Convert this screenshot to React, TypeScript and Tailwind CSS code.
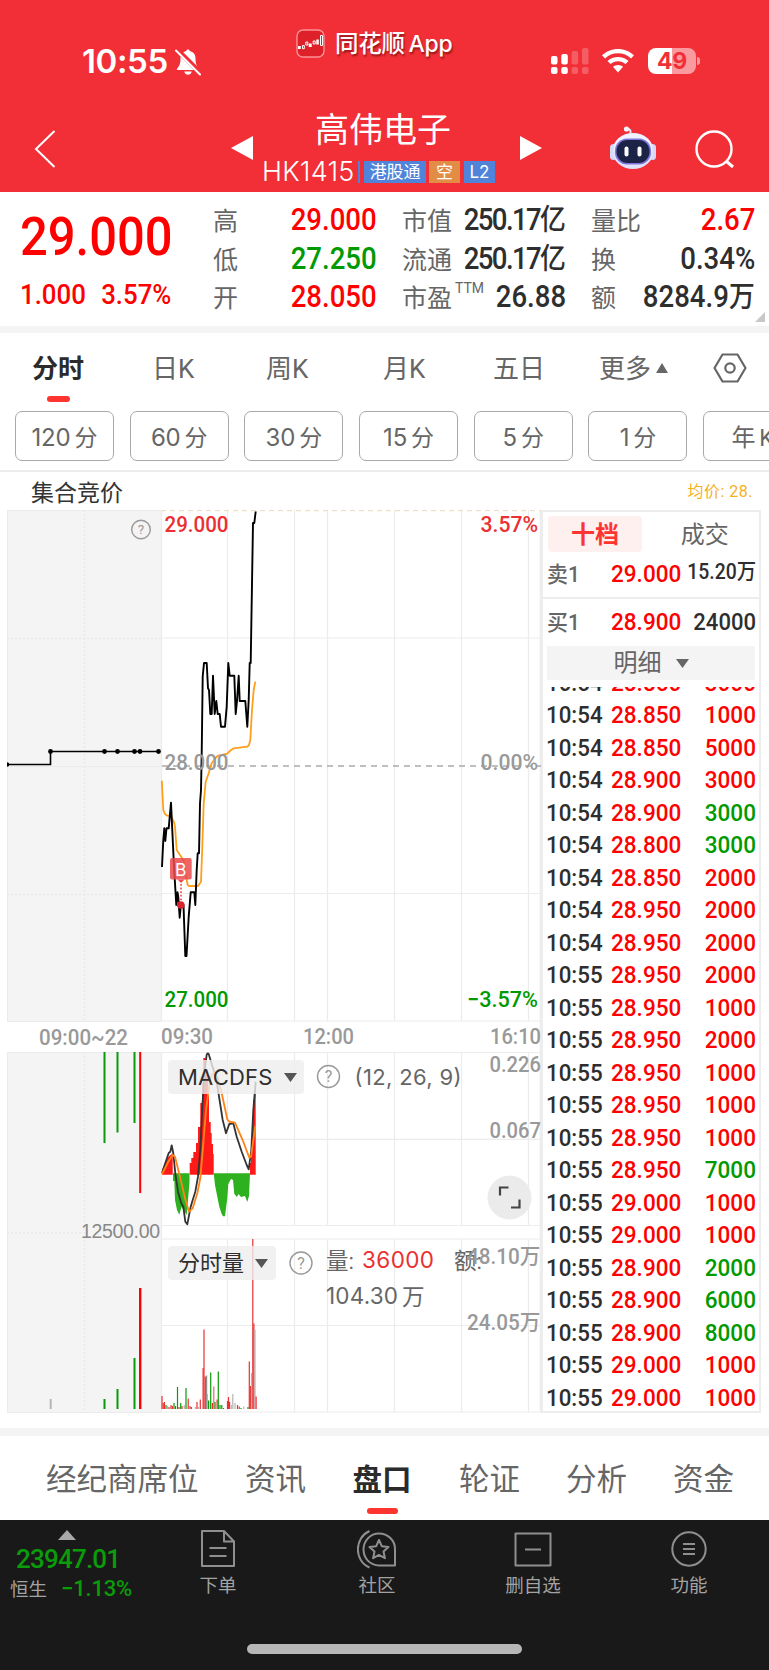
import clsx from 'clsx';

type Side = 'up' | 'down';

type QuoteItem = {
  label: string;
  sup?: string;
  value: string;
  unit?: string;
  color: string;
  tight?: boolean;
};

const QUOTE_COLUMNS: QuoteItem[][] = [
  [
    { label: '高', value: '29.000', color: 'text-[#ff0000]' },
    { label: '低', value: '27.250', color: 'text-[#009a00]' },
    { label: '开', value: '28.050', color: 'text-[#ff0000]' },
  ],
  [
    { label: '市值', value: '250.17', unit: '亿', color: 'text-[#2e2e2e]', tight: true },
    { label: '流通', value: '250.17', unit: '亿', color: 'text-[#2e2e2e]', tight: true },
    { label: '市盈', sup: 'TTM', value: '26.88', color: 'text-[#2e2e2e]' },
  ],
  [
    { label: '量比', value: '2.67', color: 'text-[#ff0000]' },
    { label: '换', value: '0.34%', color: 'text-[#2e2e2e]' },
    { label: '额', value: '8284.9', unit: '万', color: 'text-[#2e2e2e]' },
  ],
];

const PERIODS = ['120分', '60分', '30分', '15分', '5分', '1分', '年K'];

const TRADES: [string, string, string, Side][] = [
  ['10:54', '28.850', '3000', 'up'],
  ['10:54', '28.850', '1000', 'up'],
  ['10:54', '28.850', '5000', 'up'],
  ['10:54', '28.900', '3000', 'up'],
  ['10:54', '28.900', '3000', 'down'],
  ['10:54', '28.800', '3000', 'down'],
  ['10:54', '28.850', '2000', 'up'],
  ['10:54', '28.950', '2000', 'up'],
  ['10:54', '28.950', '2000', 'up'],
  ['10:55', '28.950', '2000', 'up'],
  ['10:55', '28.950', '1000', 'up'],
  ['10:55', '28.950', '2000', 'up'],
  ['10:55', '28.950', '1000', 'up'],
  ['10:55', '28.950', '1000', 'up'],
  ['10:55', '28.950', '1000', 'up'],
  ['10:55', '28.950', '7000', 'down'],
  ['10:55', '29.000', '1000', 'up'],
  ['10:55', '29.000', '1000', 'up'],
  ['10:55', '28.900', '2000', 'down'],
  ['10:55', '28.900', '6000', 'down'],
  ['10:55', '28.900', '8000', 'down'],
  ['10:55', '29.000', '1000', 'up'],
  ['10:55', '29.000', '1000', 'up'],
];

// chart geometry
const PRICE_LINE =
  '162,867 163.3,840 164.3,828.3 165.3,841 166.5,828.3 168.7,828.3 171,802.7 174,866.7 176.3,905 177.5,892.3 178.3,897 179.7,917.7 181,903 183.5,905 185.3,956 186.5,956 188.7,916.7 190.7,892.3 194.3,892.3 195.3,905 196.7,870 197.7,853.3 199,853.3 200,803.3 201,790 201.7,753.3 202.7,676.7 204,663 206.7,663 208,688.3 209,690 210.3,714 211.7,714 213,675.7 214.7,714 216.3,701 217.7,714 219.7,714 221,726.7 225,726.7 226.7,706.7 228.3,663 229.7,675.7 234.3,675.7 235.7,714 237,701 238.7,675.7 239.7,701 245.3,701 247.3,726.7 248.7,700 249.7,663 250.7,663 253,523 254.3,523 255.7,511.5';
const AVG_LINE =
  '161.8,780.7 163.3,810 165,814 167.3,815.7 170.7,816 174,822 175,826.7 176.7,850 180,855 183.7,860.7 186,876.7 187.7,885 189,886 198,886 201,881.7 202.3,846.7 203.7,803.3 205.7,781.7 208.7,773.3 211.7,763 217.3,756 227.3,753.7 231,750 233.7,748.3 247.3,746.7 249,745 250.3,740 252,710 253.7,690 255.3,681.7';
const DIF_LINE =
  'M162,1173 L165.3,1163 L168.7,1153 L170.3,1151.7 L171.7,1145.3 L173.3,1153.3 L175.3,1173.3 L178,1191.7 L181.3,1203.3 L183.3,1206.7 L185.3,1221.7 L187.3,1224.3 L190.7,1206.7 L192.7,1200 L195.3,1191.7 L198,1176.7 L200.3,1150 L202.3,1106.7 L204.7,1070 L206.7,1054.5 Q208.5,1052 209.3,1056 L212,1065 L216,1076.7 L218,1090 L222.7,1120 L226,1133.3 L229.3,1124 L233.3,1123.3 L236.7,1136.7 L241.7,1151.7 L246.7,1165 L248.7,1169.3 L251.3,1150 L253.3,1110 L255.7,1081.7';
const DEA_LINE =
  'M162,1174 L168.3,1161.7 L172.7,1155 L175,1156.7 L180,1176.7 L185,1198.3 L189,1211.7 L192.7,1208.3 L197.3,1193.3 L200.3,1178.3 L203.3,1143.3 L206,1110 L210,1080 Q214,1066 218.3,1080 L221.7,1093.3 L227.3,1119.3 L229,1121.5 L235,1122.7 L243.3,1141.7 L249.3,1157.7 L251,1156.7 L253.3,1140 L255.3,1126';
const MACD_UP = [
  'M162,1174.7 V1170 L165,1163 L168.3,1156.7 L172.7,1153.3 V1174.7Z',
  'M189.7,1174.7 V1163 H191.3 V1158 H193.3 V1152 H196 V1143 H198 V1127 H200.3 V1103 H202.3 V1083 H203.3 V1058 H205.7 V1070 H208 V1096 H209 V1122 H210.7 V1133 H211.7 V1144 H213 V1154 H213.7 V1174.7Z',
  'M250,1174.7 V1163 H251 V1150 H252 V1120 H253 V1100 H254 V1093 H255.7 V1174.7Z',
];
const MACD_DOWN = [
  'M173,1173.3 V1181 H174.3 L175,1200 L177,1210 L179.3,1214.7 L181.5,1207 L186.7,1215 L188,1200 L189.5,1182 V1173.3Z',
  'M213.7,1173.3 L215,1185 L219.3,1206.7 L221.7,1214 L223,1216.3 H225 L227.3,1198 L228.3,1184 L231,1179 L233,1180 L234.3,1194 L237,1197 L238.5,1194 L241,1197 L245,1196 L247.3,1202 L249,1196 L250,1173.3Z',
];

// [x, top, color]
const VOLUME_BARS: [number, number, string][] = [
  [162, 1396, '#ea3032'], [163.2, 1403, '#ea3032'], [164.4, 1402, '#ea3032'], [166, 1405, '#0a9a0a'], [167.5, 1406, '#b5b5b5'],
  [169, 1407, '#ea3032'], [171, 1405, '#ea3032'], [172.4, 1406, '#ea3032'], [174, 1403, '#0a9a0a'], [175.5, 1406, '#0a9a0a'],
  [177.5, 1387, '#0a9a0a'], [179, 1407, '#ea3032'], [180.7, 1403, '#0a9a0a'], [182, 1406, '#ea3032'], [184.3, 1405, '#b5b5b5'],
  [186, 1388, '#0a9a0a'], [188.2, 1398.5, '#ea3032'], [190, 1406, '#ea3032'], [191.5, 1407, '#ea3032'], [195.5, 1407, '#b5b5b5'],
  [197, 1402, '#ea3032'], [198.5, 1407, '#b5b5b5'], [200.3, 1399.5, '#ea3032'], [203.1, 1368, '#ea3032'], [204, 1329.5, '#ea3032'],
  [205.3, 1376.5, '#ea3032'], [206.6, 1375.5, '#9b8a8a'], [207.4, 1394, '#b5b5b5'], [208.6, 1400.5, '#0a9a0a'], [210.7, 1372.5, '#0a9a0a'],
  [212.4, 1403, '#ea3032'], [213.8, 1386.5, '#ea6a6a'], [215, 1402, '#0a9a0a'], [217.1, 1399.5, '#ea3032'], [218.3, 1371.5, '#0a9a0a'],
  [220, 1405, '#0a9a0a'], [221.8, 1405, '#0a9a0a'], [223.5, 1408, '#ea3032'], [227.5, 1401, '#ea3032'], [228.5, 1397, '#ea3032'],
  [229.6, 1402, '#ea3032'], [231.3, 1405, '#b5b5b5'], [232.8, 1394, '#b5b5b5'], [235, 1403, '#b5b5b5'], [237.5, 1405, '#ea3032'],
  [239.2, 1406.5, '#ea3032'], [241, 1408, '#0a9a0a'], [243.8, 1406.5, '#b5b5b5'], [248, 1407, '#0a9a0a'], [249.3, 1361.5, '#ea3032'],
  [250.6, 1386, '#ea3032'], [251.5, 1373, '#b5b5b5'], [252.8, 1239, '#ea3032'], [253.9, 1323.5, '#ea3032'], [255, 1329.5, '#b5b5b5'],
  [256.1, 1396.5, '#ea3032'],
];

const GRID_X = [227.5, 294.5, 327.5, 394.5, 461.5, 528.5];

function Caret({ className }: { className?: string }) {
  return (
    <svg viewBox="0 0 13 9" className={clsx('w-[13px] h-[9px] shrink-0', className)} fill="currentColor">
      <path d="M0 0H13L6.500 9Z" />
    </svg>
  );
}

function HelpIcon({ cx, cy, r }: { cx: number; cy: number; r: number }) {
  return (
    <g>
      <circle cx={cx} cy={cy} r={r} fill="none" stroke="#999" strokeWidth={1.4} />
      <text x={cx} y={cy + r * 0.5} textAnchor="middle" fontSize={r * 1.45} fill="#999">?</text>
    </g>
  );
}

type LabelProps = { x: number; y: number; w: number; fill?: string; children: string };

// axis label squeezed to a fixed width
function AxisLabel({ x, y, w, fill, children }: LabelProps) {
  return (
    <text x={x} y={y} textLength={w} lengthAdjust="spacingAndGlyphs" fill={fill}>{children}</text>
  );
}

function StatusBar() {
  return (
    <div className="flex h-[97px] pt-[26px]">
      <div className="flex items-center w-[296px] pl-[82px] pt-[17px] h-[54px] font-['Inter'] font-semibold text-[33px] leading-none tracking-[-0.4px]">
        10:55
        <svg viewBox="0 0 26 28" className="w-[26px] h-7 ml-[7px]">
          <path d="M13 1.500c.9 0 1.600.6 1.800 1.500 3.600.8 5.700 3.600 5.700 7.500 0 6 1.500 7.800 3.500 10.300.4.700 0 1.200-.7 1.200H2.700c-.8 0-1.200-.6-.7-1.200C4 18.300 5.500 16.500 5.500 10.500c0-3.900 2.100-6.700 5.700-7.500.2-.9.900-1.500 1.800-1.500Z" fill="#fff" />
          <path d="M9.300 23.500h7.400c-.5 2.100-2 3.300-3.700 3.300s-3.200-1.200-3.700-3.300Z" fill="#fff" />
          <path d="M1.500 1 26 25.500" stroke="#f22f37" strokeWidth="5" />
          <path d="M1 2.500 25 26.500" stroke="#fff" strokeWidth="2" strokeLinecap="round" />
        </svg>
      </div>
      <div className="flex gap-[10px] h-[36px] items-center w-[254px] text-[23.500px] font-medium tracking-[-0.3px] [text-shadow:1px_2px_2px_rgba(90,0,0,0.6)]">
        <svg viewBox="0 0 29 29" className="w-[29px] h-[29px] -mt-[2px]">
          <rect x="1" y="1" width="27" height="27" rx="6" fill="#dd2029" stroke="#fa9296" strokeWidth="1.400" />
          <path d="M2 17h2.800v3H2ZM12.700 14.500h3v3.500h-3ZM20.300 10.500h2.500V15.500h-2.500Z" fill="#fff" />
          <path d="M6.500 16.500h1.800v3.200H6.500ZM9.800 13h2v3h-2ZM17.200 12h2v3h-2ZM24.500 6.500h2v10h-2Z" fill="none" stroke="#fff" strokeWidth="1" />
        </svg>
        <span className="pt-[2px]">同花顺<span className="font-['Inter'] text-[23px] ml-[4px]">App</span></span>
      </div>
      <div className="flex items-center h-[70px] pl-px">
        <svg viewBox="0 0 38 28" className="w-[38px] h-7">
          <g fill="#fff">
            <rect x="0" y="9" width="6.500" height="8.500" rx="2" />
            <rect x="10.300" y="7" width="6.500" height="10.500" rx="2" />
            <rect x="0" y="20" width="6.500" height="7" rx="2" />
            <rect x="10.300" y="20" width="6.500" height="7" rx="2" />
            <g opacity=".22">
              <rect x="20.600" y="4" width="6.500" height="13.500" rx="2" />
              <rect x="31" y="1" width="6.500" height="16.500" rx="2" />
              <rect x="20.600" y="20" width="6.500" height="7" rx="2" />
              <rect x="31" y="20" width="6.500" height="7" rx="2" />
            </g>
          </g>
        </svg>
        <svg viewBox="0 0 32 24" className="w-8 h-6 ml-[13px]" fill="#fff">
          <path d="M16 0C22.200 0 27.800 2.400 32 6.300L29 9.400C25.600 6.200 21 4.300 16 4.300S6.400 6.200 3 9.400L0 6.300C4.200 2.400 9.800 0 16 0Z" />
          <path d="M16 8C20 8 23.700 9.500 26.500 12L23.500 15.100C21.500 13.300 18.900 12.200 16 12.200S10.500 13.300 8.500 15.100L5.500 12C8.300 9.500 12 8 16 8Z" />
          <path d="M16 16C18 16 19.700 16.700 21 17.800L16 23.500L11 17.800C12.300 16.700 14 16 16 16Z" />
        </svg>
        <div className="flex items-center ml-[14px]">
          <div className="flex items-center justify-center w-12 h-[26px] rounded-[8px] bg-[linear-gradient(90deg,#fff_49%,#f99a9e_49%)] font-['Inter'] font-bold text-[23px] leading-none text-[#f22f37] tracking-[-0.3px]">49</div>
          <div className="w-[3px] h-2 ml-px rounded-r-full bg-[#f99a9e]" />
        </div>
      </div>
    </div>
  );
}

function RobotIcon() {
  return (
    <svg viewBox="0 0 46 44" className="w-[46px] h-11">
      <path d="M20.500 8.500V5.500Q20.500 3 17.500 3" fill="none" stroke="#e3e4fb" strokeWidth="2" />
      <circle cx="16.500" cy="3" r="2.600" fill="#f4f4ff" />
      <rect x="0" y="18" width="7" height="16" rx="3.500" fill="#d5d8f6" />
      <rect x="39" y="18" width="7" height="16" rx="3.500" fill="#d5d8f6" />
      <ellipse cx="23" cy="25" rx="20.500" ry="18" fill="#dfe2fa" />
      <ellipse cx="23" cy="22" rx="19" ry="14.500" fill="#f1f2ff" />
      <rect x="5" y="12.500" width="36" height="26" rx="12" fill="#7f74dc" />
      <rect x="6.500" y="14" width="33" height="23" rx="11" fill="#1b2447" />
      <rect x="14.500" y="20.500" width="4" height="10" rx="2" fill="#fff" />
      <rect x="27.500" y="20.500" width="4" height="10" rx="2" fill="#fff" />
    </svg>
  );
}

function Header() {
  return (
    <header className="h-[192px] bg-[#f22f37] text-white">
      <StatusBar />
      <div className="flex h-[95px]">
        <svg viewBox="0 0 22 38" className="w-[22px] h-[38px] ml-[34px] mt-[33px]" fill="none" stroke="#fff" strokeWidth="2">
          <path d="M20.500 1 2 19 20.500 37" />
        </svg>
        <svg viewBox="0 0 22 24" className="w-[22px] h-6 ml-[175px] mt-[39px]" fill="#fff"><path d="M22 0V24L0 12Z" /></svg>
        <div className="flex flex-col w-[244px] ml-[11px] pt-[11px] shrink-0">
          <h1 className="text-[34px] leading-[44px] pl-[51px] whitespace-nowrap font-normal">高伟电子</h1>
          <div className="flex items-center h-[40px] text-[17px] leading-[22px]">
            <span className="font-['Inter'] font-light text-[27px] tracking-[0.200px] w-[97px] -ml-[2px]">HK1415</span>
            <span className="w-[2px] h-[22px] bg-[#4f84da] -ml-[1px]" />
            <span className="w-[62px] h-[22px] ml-[4px] text-center bg-[#4f84da] tracking-[-0.2px]">港股通</span>
            <span className="w-[31px] h-[22px] ml-[3px] text-center bg-[#e28c45]">空</span>
            <span className="w-[31px] h-[22px] ml-[4px] text-center bg-[#4f84da] font-['Inter']">L2</span>
          </div>
        </div>
        <svg viewBox="0 0 22 24" className="w-[22px] h-6 ml-[12px] mt-[39px]" fill="#fff"><path d="M0 0V24L22 12Z" /></svg>
        <div className="ml-[68px] mt-[29px]"><RobotIcon /></div>
        <svg viewBox="0 0 40 40" className="w-10 h-10 ml-[39px] mt-[32px]" fill="none" stroke="#fff" strokeWidth="2.400">
          <circle cx="19" cy="20" r="17.500" />
          <path d="M31 32 38 38" strokeWidth="3" />
        </svg>
      </div>
    </header>
  );
}

function QuotePanel() {
  return (
    <section className="relative flex h-[134px] pl-[20px] pt-[8px] font-medium">
      <div className="w-[193px] text-[#ff0000]">
        <div className="text-[54px] leading-[54px] pt-[10px] origin-left scale-x-[0.905]">29.000</div>
        <div className="flex gap-[17px] text-[28.500px] leading-[34px] pt-[14px] origin-left scale-x-[0.905]">
          <span>1.000</span>
          <span>3.57%</span>
        </div>
      </div>
      <div className="flex gap-[26px]">
        {QUOTE_COLUMNS.map((col, i) => (
          <div key={i} className="flex flex-col w-[164px] -mr-px">
            {col.map((item) => (
              <div key={item.label} className="flex justify-between h-[38.500px] leading-[40px] whitespace-nowrap">
                <span className="text-[25px] font-normal text-[#666] leading-[43px]">
                  {item.label}
                  {item.sup && <sup className="text-[14px] top-[-14px] ml-[3px] leading-none">{item.sup}</sup>}
                </span>
                <span className={clsx('text-[31px] -ml-8 origin-right scale-x-[0.89]', item.color, item.tight && 'tracking-[-1.800px]')}>
                  {item.value}
                  {item.unit && <span className="text-[29px] tracking-normal">{item.unit}</span>}
                </span>
              </div>
            ))}
          </div>
        ))}
      </div>
      <svg viewBox="0 0 10 10" className="absolute right-1 bottom-1 w-2.5 h-2.5" fill="#c8c8c8"><path d="M10 0V10H0Z" /></svg>
    </section>
  );
}

function ChartTabs() {
  return (
    <nav className="border-t-[7px] border-[#f4f4f4] h-[146px] border-b-2 border-b-[#ededed] overflow-hidden">
      <div className="flex h-[78px] pt-[18px] text-[26px] leading-[36px] text-[#666] whitespace-nowrap">
        <div className="flex flex-col items-center w-[52px] ml-[32px] font-bold text-[#2b2b2b]">
          分时
          <span className="w-[23px] h-[6px] mt-[9px] rounded-sm bg-[#fd3530] shrink-0" />
        </div>
        <span className="w-[42px] ml-[68px]">日K</span>
        <span className="w-[42px] ml-[72px]">周K</span>
        <span className="w-[42px] ml-[75px]">月K</span>
        <span className="w-[52px] ml-[68px]">五日</span>
        <span className="w-[52px] ml-[54px]">更多</span>
        <svg viewBox="0 0 12 10" className="w-3 h-[10px] ml-[5px] mt-[12px]" fill="#666"><path d="M6 0 12 10H0Z" /></svg>
        <svg viewBox="0 0 34 30" className="w-[34px] h-[30px] ml-[45px] mt-[2px]" fill="none" stroke="#666" strokeWidth="2.200">
          <path d="M9.500 1.500H24.500L32.500 15 24.500 28.500H9.500L1.500 15Z" strokeLinejoin="round" />
          <circle cx="17" cy="15" r="4.700" />
        </svg>
      </div>
      <div className="flex gap-[15.700px] pl-[15px]">
        {PERIODS.map((p) => (
          <button key={p} type="button" className="w-[99px] h-[50px] shrink-0 pt-[3px] border-[1.500px] border-[#a9a9a9] rounded-[7px] text-[23px] leading-none text-[#666]">
            <span className="font-['Inter','Noto_Sans_CJK_SC'] text-[24px] tracking-[-0.2px]">{p.slice(0, -1)}</span>
            <span className="ml-1">{p.slice(-1)}</span>
          </button>
        ))}
      </div>
    </nav>
  );
}

function Charts() {
  return (
    <div className="relative w-[541px] h-[903px] shrink-0">
      <svg viewBox="0 510 541 903" className="w-[541px] h-[903px]">
        {/* pre-open auction pane */}
        <path d="M7 510H161V1022H7ZM7 1052H161V1413H7Z" fill="#f4f4f4" />
        <g stroke="#e8e8e8" strokeWidth="1.300" strokeDasharray="2 2">
          <path d="M84.500 510V1022M84.500 1052V1413M7 638.500H161M7 894.500H161M7 1233H82" />
        </g>
        <path d="M7 766.500H161M7 510.500H161M7 1021.500H161M7 1052.500H161M7 1412.500H161M7.500 510V1022M7.500 1052V1413" stroke="#ebebeb" />
        <g stroke="#ececec" strokeWidth="1.200">
          {GRID_X.map((x) => (
            <path key={x} d={`M${x} 510V1021M${x} 1052V1225M${x} 1239V1412`} />
          ))}
          <path d="M161.500 510V1021M161.500 1052V1412M540.300 510V1412" />
          <path d="M161 638H541M161 893.500H541M161 1021H541M161 1052.500H541M161 1139.300H541M161 1225.500H541M161 1239H541M161 1325.500H541M161 1412H541" />
        </g>
        <path d="M161 510.500H541" stroke="#eedfc9" strokeWidth="1.600" strokeDasharray="5 4" />
        <path d="M162 766H541" stroke="#aaa" strokeWidth="1.400" strokeDasharray="6 5" />

        <path d="M7 764.500H50.500V751.500H158.500" fill="none" stroke="#000" strokeWidth="1.600" />
        {[50.5, 104.5, 117.5, 134.5, 140, 158.5].map((x) => (
          <circle key={x} cx={x} cy="751.500" r="2.400" />
        ))}
        <path d="M7 762.200a2.300 2.300 0 0 1 0 4.600Z" />

        <polyline points={AVG_LINE} fill="none" stroke="#ff9f1c" strokeWidth="1.800" strokeLinejoin="round" />
        <polyline points={PRICE_LINE} fill="none" stroke="#000" strokeWidth="1.900" strokeLinejoin="round" />

        <g>
          <rect x="170" y="858" width="21.700" height="21.500" rx="2" fill="#ea4a4c" fillOpacity=".85" />
          <path d="M177.500 879.500h7l-3.500 3.500Z" fill="#ea4a4c" />
          <path d="M181 884V901" stroke="#ea4a4c" strokeWidth="1.600" strokeDasharray="1.800 1.800" />
          <circle cx="180.800" cy="905" r="3.800" fill="#d8232c" />
          <text x="180.800" y="875.500" textAnchor="middle" fontSize="17.500" fill="#fff" className="font-['Inter']">B</text>
        </g>

        <g fontSize="22" className="font-medium">
          <AxisLabel x={164.500} y={532} w={64} fill="#ea3032">29.000</AxisLabel>
          <AxisLabel x={164.500} y={769.500} w={64} fill="#999">28.000</AxisLabel>
          <AxisLabel x={164.500} y={1007} w={64} fill="#009900">27.000</AxisLabel>
          <AxisLabel x={480.500} y={532} w={57.500} fill="#ea3032">3.57%</AxisLabel>
          <AxisLabel x={480.500} y={769.500} w={57.500} fill="#999">0.00%</AxisLabel>
          <AxisLabel x={467} y={1007} w={71} fill="#009900">−3.57%</AxisLabel>
        </g>
        <g fontSize="22" fill="#999" className="font-medium">
          <AxisLabel x={39} y={1045} w={89}>09:00~22</AxisLabel>
          <AxisLabel x={161} y={1043.500} w={52}>09:30</AxisLabel>
          <AxisLabel x={303} y={1043.500} w={51}>12:00</AxisLabel>
          <AxisLabel x={490} y={1043.500} w={51}>16:10</AxisLabel>
          <AxisLabel x={489.500} y={1072} w={51.500}>0.226</AxisLabel>
          <AxisLabel x={489.500} y={1138} w={51.500}>0.067</AxisLabel>
        </g>
        <text x="81" y="1238" fontSize="19.500" textLength="79" fill="#888" className="font-['Liberation_Sans']">12500.00</text>
        <HelpIcon cx={141} cy={529.500} r={9.300} />

        {/* auction bars */}
        <g strokeWidth="2">
          <path d="M104.500 1052V1143M117.500 1052V1132.500M134.500 1052V1123" stroke="#0a9a0a" />
          <path d="M140.200 1052V1193" stroke="#ff0000" />
          <path d="M50.700 1399V1409" stroke="#b5b5b5" />
          <path d="M104.500 1399V1409M117.500 1389V1409M134.500 1358V1409" stroke="#0a9a0a" />
          <path d="M140.200 1288V1409" stroke="#ff0000" strokeWidth="2.400" />
        </g>

        {MACD_UP.map((d) => <path key={d} d={d} fill="#ff1a1a" />)}
        {MACD_DOWN.map((d) => <path key={d} d={d} fill="#2eb11f" />)}
        <path d={DIF_LINE} fill="none" stroke="#333" strokeWidth="1.800" strokeLinejoin="round" />
        <path d={DEA_LINE} fill="none" stroke="#ff8417" strokeWidth="1.800" strokeLinejoin="round" />

        {VOLUME_BARS.map(([x, top, color]) => (
          <rect key={x} x={x - 0.6} y={top} width="1.200" height={1409 - top} fill={color} />
        ))}

        <HelpIcon cx={328.500} cy={1076.500} r={11} />
        <HelpIcon cx={301} cy={1263} r={11} />
        <text x="354.500" y="1084.500" fontSize="22" textLength="107" fill="#666" className="font-['Inter']">(12, 26, 9)</text>

        <g fontSize="22.500" fill="#666">
          <text x="326" y="1268.500">量:</text>
          <text x="362" y="1268" textLength="72" fill="#ea3032" className="font-['Inter']">36000</text>
          <text x="454" y="1268.500">额:</text>
          <text x="326" y="1304" textLength="72" className="font-['Inter']">104.30</text>
          <text x="402" y="1305">万</text>
        </g>
        <g fontSize="22" fill="#999" className="font-medium">
          <AxisLabel x={467} y={1264} w={73.500}>48.10万</AxisLabel>
          <AxisLabel x={467} y={1330} w={73.500}>24.05万</AxisLabel>
        </g>

        <circle cx="509.500" cy="1197.500" r="22" fill="#ebebeb" />
        <path d="M500 1195.500V1187.500H508.500M519.500 1199.500V1207.500H511" fill="none" stroke="#444" strokeWidth="2.200" />
      </svg>
      <button type="button" className="absolute left-[168px] top-[550px] flex items-center gap-[11px] w-[136px] h-[34px] pl-[10px] rounded bg-[#eeeeee]/80 font-['Inter'] text-[22px] tracking-[0.2px] text-[#2e2e2e]">
        MACDFS
        <Caret className="text-[#555]" />
      </button>
      <button type="button" className="absolute left-[168px] top-[736px] flex items-center gap-[11px] w-[108px] h-[34px] pl-[10px] rounded bg-[#eeeeee]/80 text-[22px] text-[#2e2e2e] whitespace-nowrap">
        <span className="pt-px">分时量</span>
        <Caret className="text-[#555]" />
      </button>
    </div>
  );
}

function OrderRow({ label, price, children }: { label: string; price: string; children: React.ReactNode }) {
  return (
    <>
      <span className="w-[64px] text-[22px] text-[#666] origin-left scale-x-[0.95]">{label}</span>
      <span className="w-[76px] text-[24.500px] text-[#ff0000] origin-left scale-x-[0.92]">{price}</span>
      <span className="w-[69px] text-right text-[#2e2e2e] whitespace-nowrap origin-right scale-x-[0.9] flex justify-end">{children}</span>
    </>
  );
}

function OrderBook() {
  return (
    <aside className="w-[220px] h-[903px] shrink-0 border-x-2 border-y-2 border-[#ededed] overflow-hidden font-medium">
      <div className="flex gap-1 h-10 pl-[4.500px] pt-1 text-[24px] leading-[38px] text-center">
        <div className="w-[98px] h-9 rounded-sm bg-[#fff0f0] font-bold text-[#fd3530]">十档</div>
        <div className="w-[116px] pl-1 font-normal text-[#666]">成交</div>
      </div>
      <div className="flex items-center h-[47px] pl-[3.500px] pb-px border-b-2 border-[#ededed]">
        <OrderRow label="卖1" price="29.000"><span className="text-[21.500px] -mt-[3px]">15.20万</span></OrderRow>
      </div>
      <div className="flex items-center h-[47px] pl-[3.500px] pb-px">
        <OrderRow label="买1" price="28.900"><span className="text-[24.500px]">24000</span></OrderRow>
      </div>
      <div className="flex items-center justify-center gap-[14px] w-[208px] h-[34px] ml-[4px] bg-[#f4f4f4] text-[24px] font-normal text-[#666]">
        明细
        <Caret />
      </div>
      <div className="flex flex-col justify-end h-[727px] mt-[7px] overflow-hidden">
        {TRADES.map(([time, price, volume, side], i) => (
          <div key={i} className="flex h-[32.500px] leading-[32.500px] shrink-0 pl-[3px] text-[24.500px]">
            <span className="w-[64.500px] text-[#2e2e2e] origin-left scale-x-[0.91]">{time}</span>
            <span className="w-[76px] text-[#ff0000] origin-left scale-x-[0.92]">{price}</span>
            <span className={clsx('w-[69px] text-right origin-right scale-x-[0.92]', side === 'up' ? 'text-[#ff0000]' : 'text-[#009a00]')}>{volume}</span>
          </div>
        ))}
      </div>
    </aside>
  );
}

function SectionTabs() {
  return (
    <nav className="flex h-[92px] border-t-[8px] border-[#f4f4f4] pt-[24px] text-[30.500px] leading-[40px] text-[#666] whitespace-nowrap">
      <span className="w-[152px] ml-[46px]">经纪商席位</span>
      <span className="w-[60px] ml-[47px]">资讯</span>
      <div className="flex flex-col items-center w-[60px] ml-[47px] text-[29.500px] font-bold text-[#2b2b2b]">
        盘口
        <span className="w-[31px] h-[6px] mt-[8px] rounded-sm bg-[#fd3530] shrink-0" />
      </div>
      <span className="w-[60px] ml-[47px]">轮证</span>
      <span className="w-[60px] ml-[47px]">分析</span>
      <span className="w-[60px] ml-[47px]">资金</span>
    </nav>
  );
}

const ACTIONS = [
  {
    label: '下单',
    pos: 'w-20 ml-[45px]',
    icon: <path d="M4 2H26L36 12.500V37H4ZM26 2V12.500H36M11.500 19H28.500M11.500 27H28.500" />,
  },
  {
    label: '社区',
    pos: 'w-20 ml-[79px]',
    icon: (
      <>
        <path d="M22 4.500C31 4.500 38 11.500 38 20V36.500H22C13 36.500 6.500 29 6.500 20.500S13 4.500 22 4.500Z" />
        <path d="M12.500 2C-3 9-3 32 12.500 38.500" />
        <path d="M22 11 24.800 17.200 31.500 18 26.500 22.500 27.900 29.200 22 25.800 16.100 29.200 17.500 22.500 12.500 18 19.200 17.200Z" />
      </>
    ),
  },
  {
    label: '删自选',
    pos: 'w-[100px] ml-[66px]',
    icon: <path d="M2.500 4.500H37.500V36.500H2.500ZM12 20.500H28" />,
  },
  {
    label: '功能',
    pos: 'w-[100px] ml-[56px]',
    icon: (
      <>
        <circle cx="20" cy="20" r="16.700" />
        <path d="M14 15H26M14 20H26M14 25H26" />
      </>
    ),
  },
];

function BottomBar() {
  return (
    <footer className="h-[150px] bg-[#191919] text-[#a3a3a3] flex flex-col">
      <div className="flex h-[124px]">
        <div className="w-[133px] pt-[10px] shrink-0">
          <svg viewBox="0 0 18 10" className="w-[18px] h-2.5 ml-[58px]" fill="#a8a8a8"><path d="M9 0 18 10H0Z" /></svg>
          <div className="pl-4 pt-[5px] text-[26px] leading-[29px] tracking-[-0.800px] font-medium text-[#0a9c0a]">23947.01</div>
          <div className="flex pl-[10px] pt-[2px] leading-[26px] whitespace-nowrap">
            <span className="text-[18.500px] w-[51px] pt-px">恒生</span>
            <span className="text-[22px] tracking-[-0.2px] font-medium text-[#0a9c0a]">−1.13%</span>
          </div>
        </div>
        {ACTIONS.map(({ label, pos, icon }) => (
          <button key={label} type="button" className={clsx('flex flex-col items-center shrink-0 pt-[9px]', pos)}>
            <svg viewBox="0 0 40 40" className="w-10 h-10" fill="none" stroke="#8f8f8f" strokeWidth="2" strokeLinejoin="round">
              {icon}
            </svg>
            <span className="text-[18.500px] leading-[26px] mt-[4px]">{label}</span>
          </button>
        ))}
      </div>
      <div className="w-[275px] h-[10px] ml-[247px] rounded-full bg-[#b7b7b7]" />
    </footer>
  );
}

export default function App() {
  return (
    <div className="w-[769px] h-[1670px] overflow-hidden bg-white font-['Roboto','Noto_Sans_CJK_SC',sans-serif]">
      <Header />
      <QuotePanel />
      <ChartTabs />
      <div className="flex justify-between h-[38px] pl-[31px] pr-[16px] leading-[44px]">
        <span className="text-[23px] text-[#333]">集合竞价</span>
        <span className="text-[16px] leading-[40px] text-[#f5b01d] tracking-[0.500px]">均价: 28.</span>
      </div>
      <div className="flex h-[918px]">
        <Charts />
        <OrderBook />
      </div>
      <SectionTabs />
      <BottomBar />
    </div>
  );
}
